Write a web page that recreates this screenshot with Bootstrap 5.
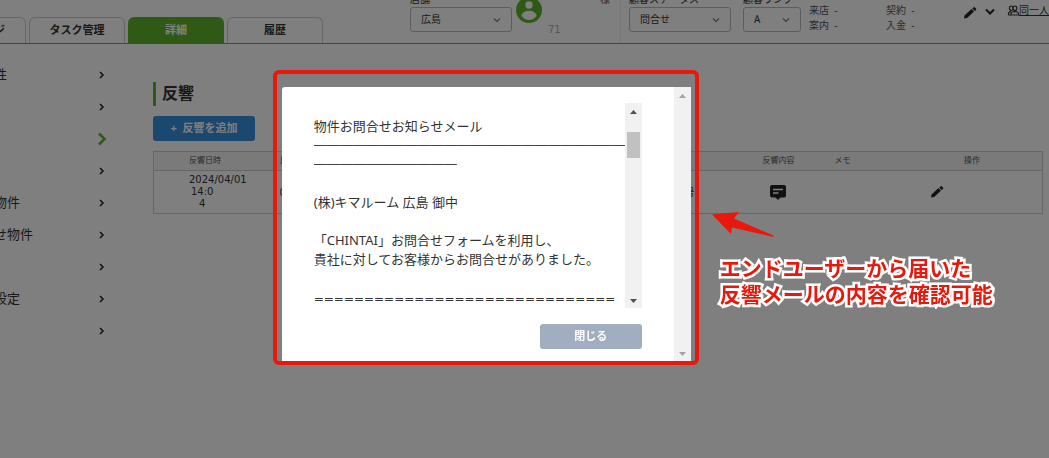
<!DOCTYPE html>
<html lang="ja">
<head>
<meta charset="utf-8">
<meta name="viewport" content="width=device-width, initial-scale=1">
<title>反響</title>
<link href="https://cdn.jsdelivr.net/npm/bootstrap@5.3.0/dist/css/bootstrap.min.css" rel="stylesheet">
<style>
  body { font-family: "Noto Sans", "Noto Sans CJK JP", sans-serif; font-size: 13px; color: #333; background: #fff; min-height: 100vh; overflow: hidden; }
  svg { display: block; }
  .topbar { height: 44px; overflow: hidden; border-bottom: 1px solid #5cb52b; }
  .tabs { flex: 0 0 410px; gap: 3px; }
  .tab-item { width: 96px; height: 26px; border: 1px solid #ccc; border-bottom: 0; border-radius: 6px 6px 0 0; font-size: 11px; font-weight: 700; line-height: 23px; text-align: center; color: #333; background: #fff; text-decoration: none; }
  .tab-item.cut { width: 26px; border-left: 0; border-top-left-radius: 0; text-align: left; text-indent: -6px; }
  .tab-item.current { background: #5cb52b; border-color: #5cb52b; color: #fff; }
  .field { padding-bottom: 11px; }
  .field label, .tiny { font-size: 10px; line-height: 14px; display: block; white-space: nowrap; }
  .field label { margin-bottom: 1px; }
  .field .form-select { width: 102px; height: 25px; font-size: 10px; line-height: 14px; padding: 3px 10px 5px; color: #333; border: 1px solid #bbb; border-radius: 3px; background: url("data:image/svg+xml,%3Csvg xmlns='http://www.w3.org/2000/svg' viewBox='0 0 8 8'%3E%3Cpath d='M1 2.5l3 3 3-3' fill='none' stroke='%23718096' stroke-width='1.2'/%3E%3C/svg%3E") no-repeat right 10px center / 8px 8px; }
  .field .rank { width: 58px; }
  .person { width: 88px; height: 44px; }
  .person .count { font-family: "DejaVu Sans", sans-serif; font-size: 10px; line-height: 14px; color: #a0aec0; padding: 24px 0 0 6px; }
  .sama { color: #555; padding-right: 10px; margin-top: -8px; }
  .divider { width: 1px; height: 44px; background: #f0f0f0; }
  .status { font-size: 10px; line-height: 15px; color: #555; height: 44px; padding-top: 4px; }
  .status > div { width: 77px; }
  .tools { height: 44px; }
  .same { font-size: 10px; line-height: 14px; color: #333; white-space: nowrap; }
  .side { flex: 0 0 153px; padding: 15px 0 0; }
  .side a { height: 32px; color: #333; text-decoration: none; margin-left: -6px; padding-right: 47px; white-space: nowrap; }
  .side a.on { padding-right: 46px; }
  .content { padding: 38px 6px 0 0; }
  .section-title { font-size: 16px; font-weight: 700; line-height: 22px; height: 24px; margin: 0 0 10px; padding-left: 6px; border-left: 3px solid #5cb52b; }
  .btn-add, .btn-shut { width: 102px; height: 25px; font-size: 11px; font-weight: 700; line-height: 15px; padding: 2px 0 5px; border: 0; border-radius: 3px; color: #fff; }
  .btn-add { background: #3490dc; }
  .btn-shut { background: #a0aec0; }
  .grid-table { width: 100%; table-layout: fixed; border: 1px solid #ccc; margin-top: 10px; font-size: 10px; line-height: 12px; }
  .grid-table th { height: 19px; font-size: 8px; font-weight: 400; line-height: 10px; background: #f4f4f4; padding: 1px 0 3px; color: #555; }
  .grid-table tr { border-bottom: 1px solid #ccc; }
  .grid-table td { height: 43px; padding: 0; vertical-align: middle; }
  .grid-table td.first { font-family: "DejaVu Sans", sans-serif; }
  .grid-table .first { padding-left: 35px; }
  .time-a { padding-left: 2px; }
  .time-b { padding-left: 10px; }
  .room { padding-right: 28px; }
  .grid-table .edit { padding-left: 28px; }
  .veil { position: fixed; inset: 0; background: rgba(0,0,0,.5); padding: 70px 0 0 26%; }
  .frame { flex: 0 0 426px; min-width: 0; border: 4px solid #e8190c; border-radius: 6px; padding: 13px 4px 0 5px; }
  .dialog-box { background: #fff; border-radius: 3px 0 0 0; }
  .dialog-main { flex: 1 1 0; min-width: 0; padding: 16px 32px 12px 32px; }
  .mail { height: 205px; line-height: 19px; font-size: 13px; }
  .mail-text { flex: 1 1 0; min-width: 0; white-space: pre; overflow: hidden; padding-top: 14px; }
  .rule { font-weight: 700; text-shadow: 0 0 0 #333, 0 0 0 #333; }
  .equals { font-family: "DejaVu Sans", sans-serif; font-size: 12px; line-height: 23px; }
  .scroll-track { flex: 0 0 17px; background: #f1f1f1; padding: 7px 0 5px; }
  .scroll-thumb { width: 13px; height: 26px; background: #c1c1c1; margin-top: 18px; }
  .callout { margin: 141px 0 0 13px; white-space: nowrap; }
  .callout p { font-size: 21px; line-height: 26px; font-weight: 700; color: #e8190c; -webkit-text-stroke: 5px #fff; paint-order: stroke fill; stroke-linejoin: round; margin: 16px 0 0 8px; }
</style>
</head>
<body>
<header class="topbar d-flex align-items-end">
  <nav class="tabs d-flex">
    <a href="#" class="tab-item cut">ジ</a>
    <a href="#" class="tab-item">タスク管理</a>
    <a href="#" class="tab-item current">詳細</a>
    <a href="#" class="tab-item">履歴</a>
  </nav>
  <div class="field"><label for="shop">店舗</label><select id="shop" class="form-select"><option>広島</option></select></div>
  <div class="person d-flex ms-1 flex-grow-0">
    <svg width="26" height="26" viewBox="0 2 26 26"><circle cx="13" cy="13" r="13" fill="#5cb52b"/><circle cx="13" cy="8" r="3.7" fill="#fff"/><path d="M5.500 19c0-3.400 4-5.300 7.500-5.300s7.500 1.900 7.500 5.300c-2 2.700-4.700 3.900-7.500 3.900s-5.500-1.200-7.500-3.900z" fill="#fff"/></svg>
    <span class="count">71</span>
  </div>
  <span class="sama tiny align-self-start">様</span>
  <div class="divider"></div>
  <div class="field ps-2"><label for="st">顧客ステータス</label><select id="st" class="form-select"><option>問合せ</option></select></div>
  <div class="field ms-2 ps-1"><label for="rk">顧客ランク</label><select id="rk" class="form-select rank"><option>A</option></select></div>
  <div class="status d-flex ps-2"><div>来店 &nbsp;-<br>案内 &nbsp;-</div><div>契約 &nbsp;-<br>入金 &nbsp;-</div></div>
  <div class="tools d-flex align-items-start pt-1">
    <svg class="mt-1" width="14" height="12" viewBox="0 0 14 12"><path d="M1 11.500l.5-3L8.500 2l2.600 2.500-7 6.500zM9.300 1.400l1.200-1c.4-.4.900-.4 1.300 0l1.200 1.200c.4.400.4.900 0 1.300l-1.100 1z" fill="#222"/></svg>
    <svg class="mt-1 ms-2" width="10" height="10" viewBox="0 0 10 10"><path d="M1 2.500l4 4 4-4" fill="none" stroke="#222" stroke-width="2"/></svg>
    <svg class="ms-2 ps-1" width="16" height="15" viewBox="-1 -1 12 12"><g fill="none" stroke="#333" stroke-width="1.200"><path d="M3.500 5C.8 5 .8.500 3.200.500c1.200 0 1.800.8 1.800 2s-.4 2.500-1.500 2.500zM7 5C4.300 5 4.600.500 7 .500s2.700 4.500 0 4.500zM.5 9.500V8.200C.5 7 1.500 6.200 3 6.200M3 9.500V8.200c0-1.300 1.500-2 4-2s3.500.7 3.500 2v1.300zM.5 9.500H3"/></g></svg>
    <a href="#" class="same">同一人</a>
  </div>
</header>

<div class="d-flex">
  <nav class="side">
    <a href="#" class="d-flex align-items-center justify-content-between">性<svg width="9" height="10" viewBox="0 0 9 10"><path d="M3 2l3 3-3 3" fill="none" stroke="#222" stroke-width="1.500"/></svg></a>
    <a href="#" class="d-flex align-items-center justify-content-end"><svg width="9" height="10" viewBox="0 0 9 10"><path d="M3 2l3 3-3 3" fill="none" stroke="#222" stroke-width="1.500"/></svg></a>
    <a href="#" class="on d-flex align-items-center justify-content-end"><svg width="10" height="14" viewBox="0 0 10 14"><path d="M2 1.500L7.500 7 2 12.500" fill="none" stroke="#5cb52b" stroke-width="2.500"/></svg></a>
    <a href="#" class="d-flex align-items-center justify-content-end"><svg width="9" height="10" viewBox="0 0 9 10"><path d="M3 2l3 3-3 3" fill="none" stroke="#222" stroke-width="1.500"/></svg></a>
    <a href="#" class="d-flex align-items-center justify-content-between">物件<svg width="9" height="10" viewBox="0 0 9 10"><path d="M3 2l3 3-3 3" fill="none" stroke="#222" stroke-width="1.500"/></svg></a>
    <a href="#" class="d-flex align-items-center justify-content-between">せ物件<svg width="9" height="10" viewBox="0 0 9 10"><path d="M3 2l3 3-3 3" fill="none" stroke="#222" stroke-width="1.500"/></svg></a>
    <a href="#" class="d-flex align-items-center justify-content-end"><svg width="9" height="10" viewBox="0 0 9 10"><path d="M3 2l3 3-3 3" fill="none" stroke="#222" stroke-width="1.500"/></svg></a>
    <a href="#" class="d-flex align-items-center justify-content-between">設定<svg width="9" height="10" viewBox="0 0 9 10"><path d="M3 2l3 3-3 3" fill="none" stroke="#222" stroke-width="1.500"/></svg></a>
    <a href="#" class="d-flex align-items-center justify-content-end"><svg width="9" height="10" viewBox="0 0 9 10"><path d="M3 2l3 3-3 3" fill="none" stroke="#222" stroke-width="1.500"/></svg></a>
  </nav>
  <main class="content flex-grow-1">
    <h1 class="section-title">反響</h1>
    <button type="button" class="btn btn-add d-block">+ &nbsp;反響を追加</button>
    <table class="grid-table">
      <colgroup><col style="width:14.2%"><col style="width:49.8%"><col style="width:12.6%"><col style="width:7.6%"><col style="width:15.8%"></colgroup>
      <thead><tr><th class="first">反響日時</th><th>反</th><th class="text-center">反響内容</th><th>メモ</th><th class="text-center">操作</th></tr></thead>
      <tbody><tr>
        <td class="first"><div>2024/04/01</div><div class="time-a">14:0</div><div class="time-b">4</div></td>
        <td><div class="room d-flex justify-content-between"><span>0</span><span>号</span></div></td>
        <td><svg class="mx-auto" width="16" height="15" viewBox="0 0 16 15"><path d="M2 0h12a2 2 0 0 1 2 2v8.500a2 2 0 0 1-2 2h-3.500L8 15l-2.500-2.500H2a2 2 0 0 1-2-2V2a2 2 0 0 1 2-2z" fill="#222"/><path d="M3 4.500h10M3 8h5.500" stroke="#fff" stroke-width="1.500"/></svg></td>
        <td></td>
        <td class="edit"><svg width="14" height="12" viewBox="0 0 14 12"><path d="M1 11.500l.5-3L8.500 2l2.600 2.500-7 6.500zM9.300 1.400l1.200-1c.4-.4.900-.4 1.300 0l1.200 1.200c.4.400.4.900 0 1.300l-1.100 1z" fill="#222"/></svg></td>
      </tr></tbody>
    </table>
  </main>
</div>

<div class="veil d-flex align-items-start">
  <div class="frame">
    <div class="dialog-box d-flex" role="dialog" aria-label="反響内容">
      <div class="dialog-main">
        <div class="mail d-flex">
          <div class="mail-text"><div>物件お問合せお知らせメール</div><div class="rule">────────────────────────</div><div class="rule">───────────</div><div> </div><div>(株)キマルーム 広島 御中</div><div> </div><div>「CHINTAI」お問合せフォームを利用し、</div><div>貴社に対してお客様からお問合せがありました。</div><div> </div><div class="equals">==============================</div></div>
          <div class="scroll-track d-flex flex-column align-items-center">
            <svg width="7" height="4" viewBox="0 0 7 4"><path d="M0 4l3.500-4L7 4z" fill="#505050"/></svg>
            <div class="scroll-thumb"></div>
            <svg class="mt-auto" width="7" height="4" viewBox="0 0 7 4"><path d="M0 0l3.500 4L7 0z" fill="#505050"/></svg>
          </div>
        </div>
        <button type="button" class="btn btn-shut d-block ms-auto mt-3">閉じる</button>
      </div>
      <div class="scroll-track d-flex flex-column align-items-center justify-content-between">
        <svg width="7" height="4" viewBox="0 0 7 4"><path d="M0 4l3.500-4L7 4z" fill="#a3a3a3"/></svg>
        <svg width="7" height="4" viewBox="0 0 7 4"><path d="M0 0l3.500 4L7 0z" fill="#a3a3a3"/></svg>
      </div>
    </div>
  </div>
  <div class="callout">
    <svg width="62" height="28" viewBox="0 0 62 28"><path d="M0 3.500L27 1l-5 6.500 39.500 17v1.500L20 16.500l-1 6.500z" fill="#e8190c"/></svg>
    <p>エンドユーザーから届いた<br>反響メールの内容を確認可能</p>
  </div>
</div>
<script src="https://cdn.jsdelivr.net/npm/bootstrap@5.3.0/dist/js/bootstrap.bundle.min.js"></script>
</body>
</html>
